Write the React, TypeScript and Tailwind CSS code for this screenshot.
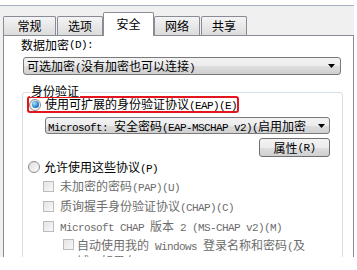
import type { ReactNode } from 'react';

const mono = "font-['Liberation_Mono',monospace] text-[11px] tracking-[-0.6px] whitespace-pre";

// SimSun-like mix: ASCII half width (6px), CJK full width (12px)
function T({ s }: { s: string }) {
  const parts = s.match(/[\x00-\x7f]+|[^\x00-\x7f]+/g) ?? [];
  return (
    <>
      {parts.map((p, i) =>
        /^[\x00-\x7f]/.test(p) ? (
          <span key={i} className={mono}>
            {p}
          </span>
        ) : (
          <span key={i} className="text-[12px]">
            {p}
          </span>
        ),
      )}
    </>
  );
}

function Arrow() {
  return (
    <svg width="7" height="4" viewBox="0 0 7 4" className="shrink-0">
      <path d="M0 0H7L3.5 4Z" fill="#000" />
    </svg>
  );
}

function Combo({ text, className }: { text: string; className: string }) {
  return (
    <div
      className={`flex items-center justify-between border border-[#7a7a7a] rounded-[3px] bg-[linear-gradient(#f3f3f3,#ececec_50%,#dedede_50%,#d0d0d0)] leading-[14px] overflow-hidden whitespace-nowrap ${className}`}
    >
      <span className="overflow-hidden">
        <T s={text} />
      </span>
      <Arrow />
    </div>
  );
}

function Radio({ on }: { on?: boolean }) {
  return (
    <div className="w-[12px] h-[12px] shrink-0 rounded-full border border-[#8a8a8a] bg-[linear-gradient(135deg,#dcdcdc,#ffffff)] flex items-center justify-center">
      {on && (
        <div className="w-[7px] h-[7px] rounded-full bg-[radial-gradient(circle_at_35%_35%,#a8e4ff,#2a86d0_55%,#0d3f7a)]" />
      )}
    </div>
  );
}

function Check({ className = '' }: { className?: string }) {
  return (
    <div
      className={`w-[11px] h-[11px] shrink-0 border border-[#bcbcbc] bg-[linear-gradient(135deg,#e4e4e4,#f8f8f8)] ${className}`}
    />
  );
}

function Row({ children, className = '' }: { children: ReactNode; className?: string }) {
  return <div className={`flex items-center h-[14px] leading-[14px] whitespace-nowrap ${className}`}>{children}</div>;
}

const tabBase =
  'flex items-center justify-center border-t border-l border-r border-[#898c95] rounded-t-[2px] text-[12px] leading-[14px]';
const tabIdle = `${tabBase} h-[19px] bg-[linear-gradient(#f4f4f4,#e8e8e8_50%,#dcdcdc)]`;

export default function App() {
  return (
    <div className="w-[357px] h-[270px] bg-white overflow-hidden pt-[5px] text-black font-['Noto_Sans_CJK_SC',sans-serif]">
      <div className="w-[354px] h-[252px] border-t border-[#a5b0c0] bg-[#f0f0f0] overflow-hidden">
        {/* tabs */}
        <div className="flex items-end h-[29px] pl-[3px]">
          <div className={`${tabIdle} w-[53px]`}>常规</div>
          <div className={`${tabIdle} ml-[1px] w-[46px]`}>选项</div>
          <div className={`${tabBase} relative z-10 h-[24px] mb-[-1px] w-[51px] bg-white pb-[2px]`}>安全</div>
          <div className={`${tabIdle} w-[46px]`}>网络</div>
          <div className={`${tabIdle} ml-[1px] w-[46px]`}>共享</div>
        </div>

        {/* panel */}
        <div className="ml-[3px] w-[351px] h-[240px] bg-white border-t border-l border-r border-[#898c95] overflow-hidden">
          <Row className="mt-[2px] ml-[17px]">
            <T s="数据加密(D):" />
          </Row>
          <Combo text="可选加密(没有加密也可以连接)" className="mt-[5px] ml-[19px] w-[318px] h-[18px] pl-[3px] pr-[5px]" />

          {/* group box */}
          <div className="relative mt-[17px] ml-[18px] w-[321px] h-[200px] border border-[#d5dfe5] rounded-[3px]">
            <span className="absolute left-[7px] top-[-10px] px-[1px] bg-white leading-[12px]">
              <T s="身份验证" />
            </span>

            <div className="mt-[3px] ml-[4px] w-[212px] h-[17px] border-2 border-[#e3151e] rounded-[3px] flex items-center">
              <Radio on />
              <span className="ml-[4px] leading-[13px] whitespace-nowrap">
                <T s="使用可扩展的身份验证协议(EAP)(E)" />
              </span>
            </div>

            <Combo
              text="Microsoft: 安全密码(EAP-MSCHAP v2)(启用加密"
              className="mt-[4px] ml-[22px] w-[285px] h-[17px] pl-[2px] pr-[4px]"
            />

            <div className="mt-[4px] ml-[236px] w-[71px] h-[19px] border border-[#707070] rounded-[3px] bg-[linear-gradient(#f3f3f3,#ececec_50%,#dedede_50%,#d0d0d0)] flex items-center justify-center leading-[14px]">
              <T s="属性(R)" />
            </div>

            <Row className="mt-[3px] ml-[5px]">
              <Radio />
              <span className="ml-[4px]">
                <T s="允许使用这些协议(P)" />
              </span>
            </Row>

            <div className="text-[#6d6d6d] pt-[5px]">
              <Row className="ml-[20px]">
                <Check />
                <span className="ml-[6px]">
                  <T s="未加密的密码(PAP)(U)" />
                </span>
              </Row>
              <Row className="mt-[6px] ml-[20px]">
                <Check />
                <span className="ml-[6px]">
                  <T s="质询握手身份验证协议(CHAP)(C)" />
                </span>
              </Row>
              <Row className="mt-[6px] ml-[20px]">
                <Check />
                <span className="ml-[6px]">
                  <T s="Microsoft CHAP 版本 2 (MS-CHAP v2)(M)" />
                </span>
              </Row>
              <div className="mt-[4px] ml-[40px] flex items-start">
                <Check className="mt-[2px]" />
                <div className="ml-[3px] flex flex-col leading-[12px]">
                  <span className="whitespace-nowrap">
                    <T s="自动使用我的 Windows 登录名称和密码(及" />
                  </span>
                  <span className="whitespace-nowrap">
                    <T s="域，如果有)(A)" />
                  </span>
                </div>
              </div>
            </div>
          </div>
        </div>
      </div>
    </div>
  );
}
